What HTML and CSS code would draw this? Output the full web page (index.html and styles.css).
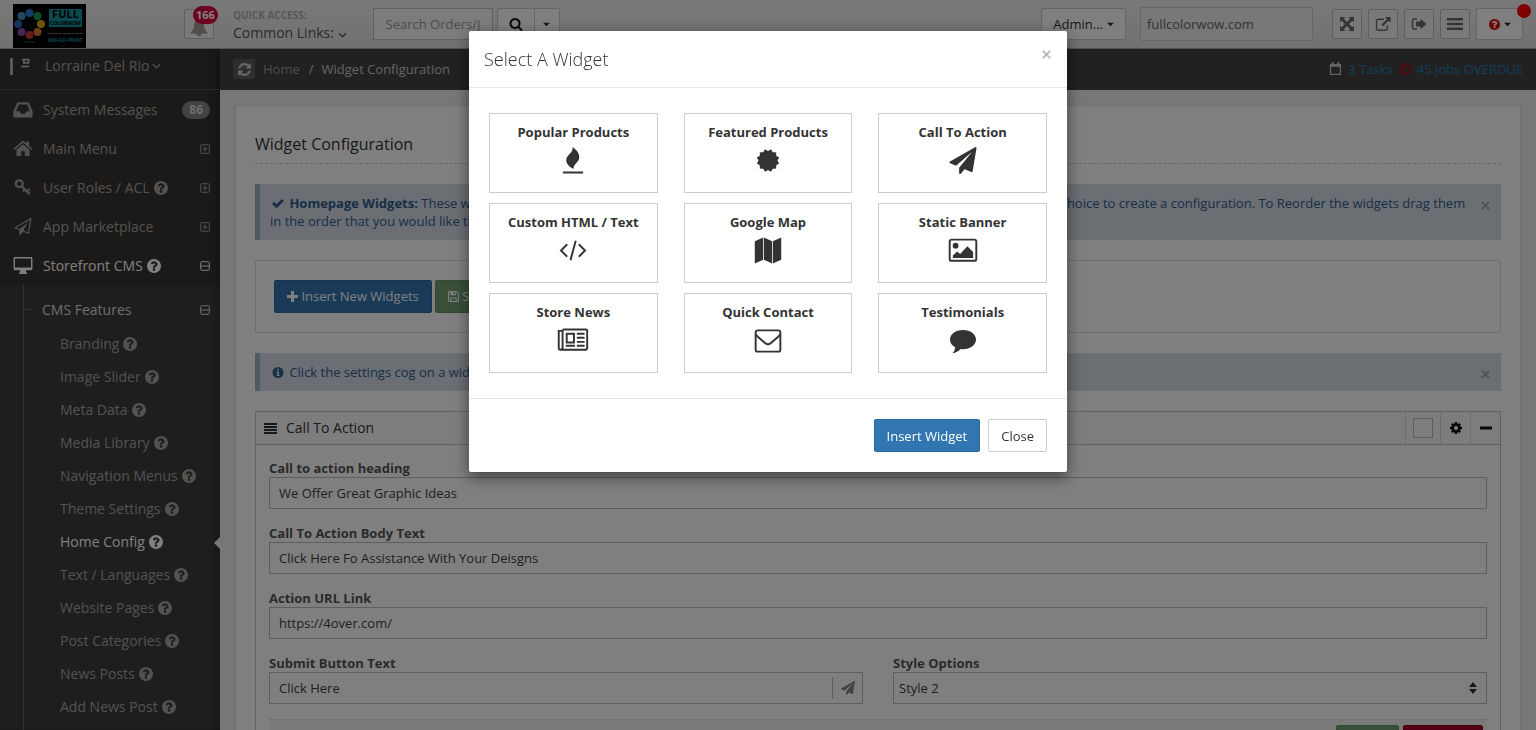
FILE: index.html
```html
<!DOCTYPE html>
<html lang="en">
<head>
  <meta charset="UTF-8">
  <meta name="viewport" content="width=device-width, initial-scale=1">
  <title>Widget Configuration</title>
  <link rel="stylesheet" href="styles.css">
</head>
<body>

  <!-- Icon set -->
  <svg class="sprite" aria-hidden="true">
    <symbol id="i-search" viewBox="0 0 1792 1792"><path d="M1216 832q0-185-131.500-316.500t-316.500-131.500-316.500 131.500-131.500 316.500 131.500 316.500 316.500 131.500 316.500-131.500 131.500-316.500zm512 832q0 52-38 90t-90 38q-54 0-90-38l-343-342q-179 124-399 124-143 0-273.500-55.500t-225-150-150-225-55.500-273.500 55.500-273.500 150-225 225-150 273.500-55.500 273.500 55.500 225 150 150 225 55.500 273.500q0 220-124 399l343 343q37 37 37 90z"/></symbol>
    <symbol id="i-caret" viewBox="0 0 10 6"><path d="M0 0.500h10L5 5.500z"/></symbol>
    <symbol id="i-angle" viewBox="0 0 10 6"><path d="M1 1l4 4 4-4" fill="none" stroke="currentColor" stroke-width="1.400"/></symbol>
    <symbol id="i-bell" viewBox="0 0 20 20"><path d="M10 1q1.300 0 1.300 1.500Q15 3.500 15 8.500c0 3.500 1.500 5.500 3.500 7v1h-6a2.500 2.500 0 0 1-5 0h-6v-1C3.500 14 5 12 5 8.500q0-5 3.700-6Q8.700 1 10 1z"/></symbol>
    <symbol id="i-help" viewBox="128 128 1536 1536"><path d="M1024 1376v-192q0-14-9-23t-23-9h-192q-14 0-23 9t-9 23v192q0 14 9 23t23 9h192q14 0 23-9t9-23zm256-672q0-88-55.500-163t-138.500-116-170-41q-243 0-371 213-15 24 8 42l132 100q7 6 19 6 16 0 25-12 53-68 86-92 34-24 86-24 48 0 85.500 26t37.500 59q0 38-20 61t-68 45q-63 28-115.500 86.500t-52.500 125.500v36q0 14 9 23t23 9h192q14 0 23-9t9-23q0-19 21.500-49.500t54.500-49.500q32-18 49-28.500t46-35 44.500-48 28-60.500 12.500-81zm384 192q0 209-103 385.500t-279.500 279.500-385.500 103-385.500-103-279.500-279.500-103-385.500 103-385.500 279.500-279.500 385.500-103 385.500 103 279.500 279.500 103 385.500z"/></symbol>
    <symbol id="i-expand" viewBox="0 0 16 16"><path d="M1 1h5.500L4.800 2.700 8 5.900l3.200-3.200L9.500 1H15v5.500l-1.700-1.700L10.100 8l3.200 3.200L15 9.500V15H9.500l1.700-1.700L8 10.100l-3.200 3.200L6.500 15H1V9.500l1.700 1.700L5.900 8 2.700 4.800 1 6.500z"/></symbol>
    <symbol id="i-external" viewBox="0 0 18 16"><path d="M10 2.700H3.700A2 2 0 0 0 1.700 4.700v8.300a2 2 0 0 0 2 2H12a2 2 0 0 0 2-2V9.500" fill="none" stroke="currentColor" stroke-width="1.500"/><path d="M11 0h6.500v6.500l-2.200-2.200-6.300 6.300-1.800-1.800 6.300-6.300z"/></symbol>
    <symbol id="i-signout" viewBox="0 0 16 14"><path d="M6 1.800H3.500a2 2 0 0 0-2 2v6.400a2 2 0 0 0 2 2H6" fill="none" stroke="currentColor" stroke-width="1.500"/><path d="M9.500 1.800L15.500 7l-6 5.200V9.500H5v-5h4.500z"/></symbol>
    <symbol id="i-bars" viewBox="0 0 16 14"><path d="M0 1h16v2.400H0zM0 5.800h16v2.400H0zM0 10.600h16V13H0z"/></symbol>
    <symbol id="i-justify" viewBox="0 0 13 11"><path d="M0 0h13v2H0zM0 3h13v2H0zM0 6h13v2H0zM0 9h13v2H0z"/></symbol>
    <symbol id="i-refresh" viewBox="128 128 1536 1536"><path d="M1639 1056q0 5-1 7-64 268-268 434.500t-478 166.500q-146 0-282.500-55t-243.500-157l-129 129q-19 19-45 19t-45-19-19-45v-448q0-26 19-45t45-19h448q26 0 45 19t19 45-19 45l-137 137q71 66 161 102t187 36q134 0 250-65t186-179q11-17 53-117 8-23 30-23h192q13 0 22.500 9.500t9.500 22.500zm25-800v448q0 26-19 45t-45 19h-448q-26 0-45-19t-19-45 19-45l138-138q-148-137-349-137-134 0-250 65t-186 179q-11 17-53 117-8 23-30 23h-199q-13 0-22.500-9.500t-9.500-22.500v-7q65-268 270-434.500t480-166.500q146 0 284 55.500t245 156.500l130-129q19-19 45-19t45 19 19 45z"/></symbol>
    <symbol id="i-calendar" viewBox="0 0 14 15"><path d="M1.700 4.500h10.600v8.800H1.700zM1 3h12" fill="none" stroke="currentColor" stroke-width="1.400"/><path d="M1 2.300h12v2.500H1zM3 0h2v3H3zM9 0h2v3H9z"/></symbol>
    <symbol id="i-clock" viewBox="0 0 12 12"><circle cx="6" cy="6" r="5" fill="none" stroke="currentColor" stroke-width="1.600"/><path d="M6.500 3v3.500H4" fill="none" stroke="currentColor" stroke-width="1.200"/></symbol>
    <symbol id="i-inbox" viewBox="0 0 17 15"><path fill-rule="evenodd" d="M3.500 1h10L17 9v4.500q0 1-1 1H1q-1 0-1-1V9zM4.800 3L2.400 9h3.200l1.200 2.300h3.400L11.400 9h3.200L12.200 3z"/></symbol>
    <symbol id="i-home" viewBox="0 0 18 16"><path d="M9 0.500l3 2.600V1.500h2.700v4L18 8.300l-1 1.200L9 2.700 1 9.500 0 8.300z"/><path d="M9 4l6.200 5.200V15h-4.500v-4.500H7.300V15H2.800V9.200z"/></symbol>
    <symbol id="i-key" viewBox="0 0 18 18"><g fill="none" stroke="currentColor" stroke-width="2.300"><ellipse cx="5" cy="5" rx="3.800" ry="3.500"/><path d="M7.500 7.500l8.500 8.500M11 11l-2 2.300M13.700 13l2.500-2.400"/></g></symbol>
    <symbol id="i-plane-o" viewBox="0 0 1792 1792"><path d="M1764 11q33 24 27 64l-256 1536q-5 29-32 45-14 8-31 8-11 0-24-5l-527-215-298 327q-18 21-47 21-14 0-23-4-19-7-30-23.500t-11-36.500v-452l-472-193q-37-14-40-55-3-39 32-59l1664-960q35-21 68 2zm-342 1499l221-1323-1434 827 336 137 863-639-478 797z"/></symbol>
    <symbol id="i-plane" viewBox="0 0 1792 1792"><path d="M1764 11q33 24 27 64l-256 1536q-5 29-32 45-14 8-31 8-11 0-24-5l-453-185-242 295q-18 23-49 23-13 0-22-4-19-7-30.500-23.500t-11.500-36.500v-349l864-1059-1069 925-395-162q-37-14-40-55-2-40 32-59l1664-960q15-9 32-9 20 0 36 11z"/></symbol>
    <symbol id="i-desktop" viewBox="0 0 20 18"><path fill-rule="evenodd" d="M1.500 0h17Q20 0 20 1.500v11q0 1.500-1.500 1.500h-5.300v2.500h1V18H6v-1.500h1V14H1.500Q0 14 0 12.500v-11Q0 0 1.500 0zm0 1.500V11h17V1.500z"/></symbol>
    <symbol id="i-plus-box" viewBox="0 0 10 10"><rect x="0.700" y="0.700" width="8.600" height="8.600" rx="1" fill="none" stroke="currentColor"/><path d="M2.500 5h5M5 2.500v5" stroke="currentColor"/></symbol>
    <symbol id="i-minus-box" viewBox="0 0 10 10"><rect x="0.700" y="0.700" width="8.600" height="8.600" rx="1" fill="none" stroke="currentColor"/><path d="M1 5h8" stroke="currentColor"/></symbol>
    <symbol id="i-check" viewBox="0 0 12 10"><path d="M0 5.300l2-2 2.500 2.500L10 0.500l2 2L4.500 9.800z"/></symbol>
    <symbol id="i-info" viewBox="0 0 12 12"><path fill-rule="evenodd" d="M6 0a6 6 0 1 1 0 12A6 6 0 0 1 6 0zM5 1.800v1.700h2V1.800zM4.200 4.700v1h.8v3h-.8v1.200h3.600V8.700H7v-4z"/></symbol>
    <symbol id="i-plus" viewBox="0 0 10 10"><path d="M3.600 0h2.800v3.600H10v2.800H6.400V10H3.600V6.400H0V3.600h3.600z"/></symbol>
    <symbol id="i-minus" viewBox="0 0 12 12"><path d="M0 4.500h12v3H0z"/></symbol>
    <symbol id="i-save" viewBox="0 0 12 12"><path fill-rule="evenodd" d="M1 0h8l3 3v8q0 1-1 1H1q-1 0-1-1V1q0-1 1-1zm.2 1.200v9.600h1.300V7h7v3.800h1.300V3.500L8.500 1.200v3.300h-6V1.200zm4.800 0v2.200h1.500V1.200zM3.700 8.200v2.600h4.600V8.200z"/></symbol>
    <symbol id="i-times" viewBox="0 0 10 10"><path d="M1 1l8 8M9 1L1 9" stroke="currentColor" stroke-width="2.200"/></symbol>
    <symbol id="i-cog" viewBox="128 128 1536 1536"><path d="M1152 896q0-106-75-181t-181-75-181 75-75 181 75 181 181 75 181-75 75-181zm512-109v222q0 12-8 23t-20 13l-185 28q-19 54-39 91 35 50 107 138 10 12 10 25t-9 23q-27 37-99 108t-94 71q-12 0-26-9l-138-108q-44 23-91 38-16 136-29 186-7 28-36 28h-222q-14 0-24.500-8.500t-11.500-21.500l-28-184q-49-16-90-37l-141 107q-10 9-25 9-14 0-25-11-126-114-165-168-7-10-7-23 0-12 8-23 15-21 51-66.500t54-70.500q-27-50-41-99l-183-27q-13-2-21-12.500t-8-23.500v-222q0-12 8-23t19-13l186-28q14-46 39-92-40-57-107-138-10-12-10-24 0-10 9-23 26-36 98.500-107.500t94.500-71.500q13 0 26 10l138 107q44-23 91-38 16-136 29-186 7-28 36-28h222q14 0 24.500 8.500t11.500 21.500l28 184q49 16 90 37l142-107q9-9 24-9 13 0 25 10 129 119 165 170 7 8 7 22 0 12-8 23-15 21-51 66.500t-54 70.500q26 50 41 98l183 28q13 2 21 12.500t8 23.500z"/></symbol>
    <symbol id="i-fire" viewBox="0 0 28 28"><path d="M13.500 0c4 3 7 6 7 10.500 0 5.500-6 6.500-6 12.200C10 20.500 7 17.500 7 13.500 7 8 14.500 6.500 13.500 0zM3.500 25.500h21V27.500h-21z"/></symbol>
    <symbol id="i-certificate" viewBox="0 0 28 28"><path d="M5.500 5.500h17v17h-17z"/><path d="M5.500 5.500h17v17h-17z" transform="rotate(30 14 14)"/><path d="M5.500 5.500h17v17h-17z" transform="rotate(60 14 14)"/></symbol>
    <symbol id="i-code" viewBox="0 0 28 28"><path d="M8 7.500L1.500 14 8 20.500M20 7.500l6.500 6.500-6.500 6.500M16.800 4l-5.400 20" fill="none" stroke="currentColor" stroke-width="2"/></symbol>
    <symbol id="i-map" viewBox="0 0 28 28"><path d="M.3 4.500L9 .5v23l-8.700 4zM9.800.5l8.400 4v23l-8.400-4zM19 4.500l8.700-4v23l-8.700 4z"/></symbol>
    <symbol id="i-image" viewBox="0 0 30 28"><rect x="1.200" y="2.700" width="27.600" height="22" rx="2" fill="none" stroke="currentColor" stroke-width="2"/><circle cx="7.300" cy="9" r="3"/><path d="M4.500 21.700v-2.500L9 15l3 2.500 7.500-8 6 6v6.200z"/></symbol>
    <symbol id="i-news" viewBox="0 0 32 28"><path d="M5.500 2.500h24q1.200 0 1.200 1.200v18q0 1.800-1.800 1.800H3Q1.200 23.500 1.200 21.700V4h4M5.200 2.500v19q0 2-2 2M9.500 7h7.500v9H9.500zM8.500 19.500h9.500M20 7h8M20 11.200h8M20 15.400h8M20 19.500h8" fill="none" stroke="currentColor" stroke-width="2"/></symbol>
    <symbol id="i-mail" viewBox="0 0 28 28"><rect x="1.200" y="3.500" width="25.600" height="22" rx="2" fill="none" stroke="currentColor" stroke-width="2"/><path d="M1.500 8q2 2.500 9.500 8.700 3 2.600 6 0Q24.500 10.500 26.500 8" fill="none" stroke="currentColor" stroke-width="2"/></symbol>
    <symbol id="i-comment" viewBox="0 0 28 28"><path d="M14 3c7.500 0 13.500 4.300 13.500 10S21.500 23 14 23q-1.300 0-2.500-.2Q8.500 26.500 3 27.300q2.500-2.300 3-6Q.5 18 .5 13C.5 7.300 6.500 3 14 3z"/></symbol>
    <symbol id="i-updown" viewBox="0 0 8 12"><path d="M0 5l4-5 4 5zM0 7h8l-4 5z"/></symbol>
  </svg>

  <header class="topbar">
    <a href="#" class="logo" aria-label="Full Colorwow">
      <svg viewBox="0 0 73 44">
        <rect width="73" height="44"/>
        <circle cx="16.500" cy="9" r="4" fill="#2a7fd0"/>
        <circle cx="24.500" cy="12" r="4" fill="#1c9a50"/>
        <circle cx="28" cy="20" r="4" fill="#d8a818"/>
        <circle cx="24.500" cy="28" r="4" fill="#d07a30"/>
        <circle cx="16.500" cy="31" r="4" fill="#c8382c"/>
        <circle cx="8.500" cy="28" r="4" fill="#9048b0"/>
        <circle cx="5" cy="20" r="4" fill="#2468b8"/>
        <circle cx="8.500" cy="12" r="4" fill="#3f93b8"/>
        <path d="M11 38h11" stroke="#0f6068"/>
        <rect x="36" y="5" width="33" height="18" fill="#17929c"/>
        <text x="52.500" y="14" class="logo-full">FULL</text>
        <text x="52.500" y="21" class="logo-name">COLORWOW</text>
        <text x="52.500" y="30" class="logo-tag">YOUR ONLINE ONESTOP PRINTSHOP</text>
        <text x="52.500" y="38" class="logo-phone">800-GO-PRINT</text>
      </svg>
    </a>
    <button class="icon-btn bell" aria-label="Notifications">
      <svg><use href="#i-bell"/></svg>
      <span class="bell-count">166</span>
    </button>
    <div class="quick">
      <span class="quick-label">QUICK ACCESS:</span>
      <a href="#">Common Links: <svg class="angle"><use href="#i-angle"/></svg></a>
    </div>
    <form class="search">
      <input type="text" placeholder="Search Orders/Jobs" aria-label="Search">
      <div class="btn-group">
        <button type="button" class="btn-white go" aria-label="Search"><svg><use href="#i-search"/></svg></button>
        <button type="button" class="btn-white drop" aria-label="Search options"><svg class="caret"><use href="#i-caret"/></svg></button>
      </div>
    </form>
    <div class="top-right">
      <button class="btn-white admin">Admin... <svg class="caret"><use href="#i-caret"/></svg></button>
      <input class="domain" type="text" value="fullcolorwow.com" aria-label="Domain">
      <div class="icon-row">
        <button class="icon-btn" aria-label="Full screen"><svg><use href="#i-expand"/></svg></button>
        <button class="icon-btn" aria-label="Open site"><svg><use href="#i-external"/></svg></button>
        <button class="icon-btn" aria-label="Sign out"><svg><use href="#i-signout"/></svg></button>
        <button class="icon-btn" aria-label="Menu"><svg><use href="#i-bars"/></svg></button>
        <button class="btn-white help-btn" aria-label="Help"><svg class="help-red"><use href="#i-help"/></svg><svg class="caret"><use href="#i-caret"/></svg><span class="dot"></span></button>
      </div>
    </div>
  </header>

  <div class="layout">
    <aside class="sidebar">
      <a href="#" class="user">
        <svg class="avatar" viewBox="0 0 28 20"><path d="M1.500 2v17" stroke="#c8c8c8" stroke-width="2.500"/><path d="M12 3.500h7M13 7h6M11 10.500h8M14 3v4M18.500 3v4" stroke="#c8c8c8" stroke-width="1.600" fill="none"/></svg>
        Lorraine Del Rio <svg class="angle"><use href="#i-angle"/></svg>
      </a>
      <nav>
        <ul class="menu">
          <li><a href="#"><svg class="mi"><use href="#i-inbox"/></svg>System Messages<span class="count">86</span></a></li>
          <li><a href="#"><svg class="mi"><use href="#i-home"/></svg>Main Menu<svg class="toggle"><use href="#i-plus-box"/></svg></a></li>
          <li><a href="#"><svg class="mi"><use href="#i-key"/></svg>User Roles / ACL<svg class="help"><use href="#i-help"/></svg><svg class="toggle"><use href="#i-plus-box"/></svg></a></li>
          <li><a href="#"><svg class="mi"><use href="#i-plane-o"/></svg>App Marketplace<svg class="toggle"><use href="#i-plus-box"/></svg></a></li>
          <li><a href="#" class="open"><svg class="mi"><use href="#i-desktop"/></svg>Storefront CMS<svg class="help"><use href="#i-help"/></svg><svg class="toggle"><use href="#i-minus-box"/></svg></a></li>
        </ul>
        <div class="submenu">
          <a href="#" class="sub-title">CMS Features<svg class="toggle"><use href="#i-minus-box"/></svg></a>
          <ul>
            <li><a href="#">Branding<svg class="help"><use href="#i-help"/></svg></a></li>
            <li><a href="#">Image Slider<svg class="help"><use href="#i-help"/></svg></a></li>
            <li><a href="#">Meta Data<svg class="help"><use href="#i-help"/></svg></a></li>
            <li><a href="#">Media Library<svg class="help"><use href="#i-help"/></svg></a></li>
            <li><a href="#">Navigation Menus<svg class="help"><use href="#i-help"/></svg></a></li>
            <li><a href="#">Theme Settings<svg class="help"><use href="#i-help"/></svg></a></li>
            <li><a href="#" class="current">Home Config<svg class="help"><use href="#i-help"/></svg></a></li>
            <li><a href="#">Text / Languages<svg class="help"><use href="#i-help"/></svg></a></li>
            <li><a href="#">Website Pages<svg class="help"><use href="#i-help"/></svg></a></li>
            <li><a href="#">Post Categories<svg class="help"><use href="#i-help"/></svg></a></li>
            <li><a href="#">News Posts<svg class="help"><use href="#i-help"/></svg></a></li>
            <li><a href="#">Add News Post<svg class="help"><use href="#i-help"/></svg></a></li>
          </ul>
        </div>
      </nav>
    </aside>

    <main>
      <div class="ribbon">
        <button class="refresh" aria-label="Refresh"><svg><use href="#i-refresh"/></svg></button>
        <ol class="crumbs">
          <li><a href="#">Home</a></li>
          <li>Widget Configuration</li>
        </ol>
        <div class="status">
          <svg class="cal"><use href="#i-calendar"/></svg>
          <a href="#">3 Tasks</a>
          <svg class="clock"><use href="#i-clock"/></svg>
          <a href="#">45 Jobs OVERDUE</a>
        </div>
      </div>

      <section class="panel">
        <h1>Widget Configuration</h1>

        <div class="alert">
          <p><svg><use href="#i-check"/></svg> <strong>Homepage Widgets:</strong> These widgets will show up on your homepage. Insert new widgets and simply click in the settings of your choice to create a configuration. To Reorder the widgets drag them in the order that you would like them to appear.</p>
          <button class="close" aria-label="Dismiss"><svg><use href="#i-times"/></svg></button>
        </div>

        <div class="well">
          <button class="btn btn-primary"><svg><use href="#i-plus"/></svg> Insert New Widgets</button>
          <button class="btn btn-success"><svg><use href="#i-save"/></svg> Save Changes</button>
        </div>

        <div class="alert">
          <p><svg><use href="#i-info"/></svg> Click the settings cog on a widget to edit its options.</p>
          <button class="close" aria-label="Dismiss"><svg><use href="#i-times"/></svg></button>
        </div>

        <article class="widget">
          <header>
            <svg class="handle"><use href="#i-justify"/></svg>
            <h2>Call To Action</h2>
            <label class="tool tool-check"><input type="checkbox" aria-label="Select widget"></label>
            <button class="tool" aria-label="Settings"><svg><use href="#i-cog"/></svg></button>
            <button class="tool" aria-label="Collapse"><svg><use href="#i-minus"/></svg></button>
          </header>
          <form>
            <div class="field">
              <label for="heading">Call to action heading</label>
              <input id="heading" type="text" value="We Offer Great Graphic Ideas">
            </div>
            <div class="field">
              <label for="body">Call To Action Body Text</label>
              <input id="body" type="text" value="Click Here Fo Assistance With Your Deisgns">
            </div>
            <div class="field">
              <label for="url">Action URL Link</label>
              <input id="url" type="text" value="https://4over.com/">
            </div>
            <div class="field-row">
              <div class="field">
                <label for="submit">Submit Button Text</label>
                <div class="with-icon">
                  <input id="submit" type="text" value="Click Here">
                  <span class="append"><svg><use href="#i-plane"/></svg></span>
                </div>
              </div>
              <div class="field">
                <label for="style">Style Options</label>
                <div class="select">
                  <select id="style"><option>Style 1</option><option selected>Style 2</option></select>
                  <svg><use href="#i-updown"/></svg>
                </div>
              </div>
            </div>
            <footer>
              <button type="button" class="btn btn-success" aria-label="Save"></button>
              <button type="button" class="btn btn-danger" aria-label="Remove"></button>
            </footer>
          </form>
        </article>
      </section>
    </main>
  </div>

  <!-- Widget picker -->
  <div class="backdrop">
    <div class="modal" role="dialog" aria-labelledby="modal-title">
      <div class="modal-header">
        <h4 id="modal-title">Select A Widget</h4>
        <button class="close" aria-label="Close"><svg><use href="#i-times"/></svg></button>
      </div>
      <div class="modal-body">
        <button class="tile">Popular Products<svg><use href="#i-fire"/></svg></button>
        <button class="tile">Featured Products<svg><use href="#i-certificate"/></svg></button>
        <button class="tile">Call To Action<svg><use href="#i-plane"/></svg></button>
        <button class="tile">Custom HTML / Text<svg><use href="#i-code"/></svg></button>
        <button class="tile">Google Map<svg><use href="#i-map"/></svg></button>
        <button class="tile">Static Banner<svg><use href="#i-image"/></svg></button>
        <button class="tile">Store News<svg><use href="#i-news"/></svg></button>
        <button class="tile">Quick Contact<svg><use href="#i-mail"/></svg></button>
        <button class="tile">Testimonials<svg><use href="#i-comment"/></svg></button>
      </div>
      <div class="modal-footer">
        <button class="btn btn-primary">Insert Widget</button>
        <button class="btn btn-default">Close</button>
      </div>
    </div>
  </div>

</body>
</html>
```

FILE: styles.css
```css
* {
  box-sizing: border-box;
}

body {
  margin: 0;
  height: 100vh;
  overflow: hidden;
  display: flex;
  flex-direction: column;
  font-family: "Open Sans", Arial, sans-serif;
  font-size: 13px;
  line-height: 18px;
  color: #333;
  background: #eee;
}

button, input, select {
  font: inherit;
  color: inherit;
}

button {
  cursor: pointer;
}

svg {
  fill: currentColor;
  flex-shrink: 0;
}

a {
  text-decoration: none;
}

ul, ol {
  list-style: none;
  margin: 0;
  padding: 0;
}

.sprite {
  position: absolute;
  width: 0;
  height: 0;
}

/* Top bar */
.topbar {
  height: 49px;
  flex-shrink: 0;
  display: flex;
  align-items: center;
  padding: 0 13px;
  background: linear-gradient(to bottom, #f3f3f3, #e2e2e2);
  border-bottom: 1px solid #a8a8a8;
}

.logo {
  width: 73px;
  height: 44px;
  margin-top: 3px;
}

.logo svg {
  display: block;
  width: 73px;
  height: 44px;
  fill: #000;
}

.logo text {
  text-anchor: middle;
  font-weight: 700;
}

.logo-full {
  font-size: 11px;
}

.logo-name {
  font-size: 5px;
}

.logo-tag {
  font-size: 2px;
  fill: #ccc;
}

.logo-phone {
  font-size: 5px;
  fill: #17929c;
}

.icon-btn {
  width: 30px;
  height: 30px;
  padding: 0;
  display: flex;
  align-items: center;
  justify-content: center;
  background: #f3f3f3;
  border: 1px solid #bfbfbf;
  border-radius: 2px;
  color: #6d6a69;
}

.icon-btn svg {
  width: 16px;
  height: 16px;
}

.bell {
  position: relative;
  margin-left: 98px;
  color: #a49b97;
}

.bell svg {
  width: 20px;
  height: 20px;
  margin-top: 6px;
}

.bell-count {
  position: absolute;
  top: -4px;
  left: 8px;
  padding: 0 3px;
  border-radius: 10px;
  background: #d8003c;
  color: #fff;
  font-size: 11px;
  font-weight: 700;
}

.quick {
  display: flex;
  flex-direction: column;
  margin-left: 19px;
  color: #555;
}

.quick-label {
  font-size: 10px;
  font-weight: 700;
  color: #afafaf;
}

.quick a {
  font-size: 14px;
  color: inherit;
}

.angle {
  width: 9px;
  height: 6px;
}

.caret {
  width: 7px;
  height: 5px;
}

.search {
  display: flex;
  gap: 4px;
  margin-left: 26px;
}

.search input {
  width: 120px;
  height: 32px;
  padding: 0 12px;
  background: #f8f8f8;
  border: 1px solid #bfbfbf;
}

.search input::placeholder {
  color: #9a9a9a;
}

.btn-group {
  display: flex;
}

.btn-white {
  height: 32px;
  display: flex;
  align-items: center;
  justify-content: center;
  gap: 4px;
  padding: 0 11px;
  background: #fff;
  border: 1px solid #ccc;
  border-radius: 2px;
}

.btn-white.go {
  width: 38px;
  color: #111;
}

.btn-white.go svg {
  width: 14px;
  height: 14px;
}

.btn-white.drop {
  width: 26px;
  margin-left: -1px;
  padding: 0;
}

.top-right {
  display: flex;
  align-items: center;
  gap: 14px;
  margin-left: auto;
}

.domain {
  width: 173px;
  height: 34px;
  padding: 0 6px;
  color: #666;
  background: #f0f0f0;
  border: 1px solid #ccc;
}

.icon-row {
  display: flex;
  align-items: center;
  gap: 6px;
  margin-left: 5px;
}

.help-btn {
  position: relative;
  width: 47px;
}

.help-red {
  width: 11px;
  height: 11px;
  color: #d00;
}

.dot {
  position: absolute;
  top: -5px;
  right: -9px;
  width: 14px;
  height: 14px;
  border-radius: 50%;
  background: #f00;
}

/* Sidebar */
.layout {
  flex: 1;
  min-height: 0;
  display: flex;
  overflow: hidden;
}

.sidebar {
  width: 220px;
  flex-shrink: 0;
  display: flex;
  flex-direction: column;
  font-size: 14px;
  background: #363433;
  box-shadow: inset -6px 0 8px -4px #222;
}

.sidebar nav {
  flex: 1;
  display: flex;
  flex-direction: column;
}

.sidebar a {
  color: #a8a4a2;
}

.user {
  height: 41px;
  display: flex;
  align-items: center;
  gap: 3px;
  padding: 0 10px 6px;
  border-bottom: 1px solid #525151;
}

.avatar {
  width: 28px;
  height: 20px;
  margin-right: 4px;
}

.menu a {
  display: flex;
  align-items: center;
  height: 39px;
  padding: 0 10px 0 13px;
}

.sidebar .open,
.sidebar .current {
  color: #fff;
}

.mi {
  width: 20px;
  height: 17px;
  margin-right: 10px;
}

.help {
  width: 14px;
  height: 14px;
  margin-left: 4px;
}

.toggle {
  width: 10px;
  height: 10px;
  margin-left: auto;
}

.count {
  margin-left: auto;
  padding: 0 7px;
  border-radius: 9px;
  background: #858585;
  color: #ddd;
  font-size: 12px;
  font-weight: 700;
}

.submenu {
  flex: 1;
  position: relative;
  padding: 8px 10px 0 42px;
  background: #3c3c3c;
  box-shadow: inset -6px 0 8px -4px #282828;
}

/* tree guide */
.submenu::before {
  content: "";
  position: absolute;
  top: 0;
  bottom: 0;
  left: 23px;
  border-left: 1px solid #666;
}

.submenu::after {
  content: "";
  position: absolute;
  top: 24px;
  left: 24px;
  width: 7px;
  border-top: 1px solid #666;
}

.submenu .sub-title {
  display: flex;
  align-items: center;
  height: 34px;
  color: #ddd;
}

.submenu li a {
  display: flex;
  align-items: center;
  height: 33px;
  padding-left: 18px;
}

.submenu .current {
  position: relative;
}

.current::after {
  content: "";
  position: absolute;
  right: -10px;
  top: 12px;
  border: 6px solid transparent;
  border-left-width: 0;
  border-right-color: #eee;
}

/* Ribbon */
main {
  flex: 1;
  min-width: 0;
}

.ribbon {
  height: 41px;
  display: flex;
  align-items: center;
  padding: 0 13px 1px;
  background: #424242;
  color: #c8c8c8;
}

.refresh {
  width: 22px;
  height: 20px;
  padding: 0;
  display: flex;
  align-items: center;
  justify-content: center;
  border: 0;
  border-radius: 2px;
  background: #5c5c5c;
  color: #ccc;
}

.refresh svg {
  width: 13px;
  height: 13px;
}

.crumbs {
  display: flex;
  margin-left: 8px;
}

.crumbs li + li::before {
  content: "/";
  padding: 0 8px 0 9px;
}

.crumbs a {
  color: #999;
}

.status {
  display: flex;
  align-items: center;
  gap: 6px;
  margin-left: auto;
}

.status a {
  color: #2380b5;
}

.cal {
  width: 13px;
  height: 14px;
}

.clock {
  width: 12px;
  height: 12px;
  color: #c00010;
}

/* Content */
.panel {
  margin: 15px 15px 0;
  padding: 28px 19px;
  background: #fff;
  border: 1px solid #e0e0e0;
}

h1 {
  margin: 0 0 20px;
  padding-bottom: 8px;
  font-size: 16px;
  line-height: 21px;
  font-weight: 400;
  border-bottom: 1px dashed #ccc;
}

.alert {
  display: flex;
  align-items: flex-start;
  margin-bottom: 20px;
  padding: 10px;
  color: #305d8c;
  background: #d6dde7;
  border-left: 5px solid #9cb4c5;
}

.alert p {
  flex: 1;
  margin: 0;
}

.alert p svg {
  width: 12px;
  height: 11px;
  margin: 0 2px;
  vertical-align: -1px;
}

.close {
  display: flex;
  padding: 0;
  background: none;
  border: 0;
  color: #b8b8b8;
}

.close svg {
  width: 9px;
  height: 9px;
}

.alert .close {
  margin: 7px 1px 0 8px;
  color: #a0a6ae;
}

.well {
  display: flex;
  gap: 3px;
  margin-bottom: 20px;
  padding: 19px 18px;
  border: 1px solid #ddd;
  border-radius: 2px;
}

.btn {
  height: 33px;
  padding: 0 12px;
  border: 1px solid #ccc;
  border-radius: 2px;
  background: #fff;
  white-space: nowrap;
}

.well .btn {
  padding: 0 12px 1px;
}

.btn svg {
  width: 11px;
  height: 11px;
  vertical-align: -1px;
}

.btn-primary {
  background: #3276b1;
  border-color: #2c699d;
  color: #fff;
}

.btn-success {
  background: #739e73;
  border-color: #659265;
  color: #fff;
}

.btn-danger {
  background: #a90329;
  border-color: #900323;
  color: #fff;
}

.widget {
  border: 1px solid #c2c2c2;
}

.widget > header {
  display: flex;
  align-items: center;
  height: 33px;
  padding-left: 8px;
  background: #fafafa;
  border-bottom: 1px solid #c2c2c2;
}

.handle {
  width: 13px;
  height: 11px;
}

h2 {
  flex: 1;
  margin: 0 0 0 9px;
  font-size: 14px;
  line-height: 18px;
  font-weight: 400;
}

.tool {
  width: 30px;
  height: 32px;
  padding: 0;
  display: flex;
  align-items: center;
  justify-content: center;
  background: none;
  border: 0;
  border-left: 1px solid #ddd;
  color: #111;
}

.tool-check {
  width: 35px;
}

.tool svg {
  width: 12px;
  height: 12px;
}

.tool input {
  appearance: none;
  width: 20px;
  height: 20px;
  margin: 0;
  border: 1px solid #bdbdbd;
}

.widget form {
  padding: 14px 13px;
}

.field {
  margin-bottom: 15px;
}

.field label {
  display: block;
  color: #555;
  font-weight: 700;
}

.field input,
.field select {
  display: block;
  width: 100%;
  height: 32px;
  padding: 0 9px 1px;
  color: #404040;
  background: #fff;
  border: 1px solid #bdbdbd;
  border-radius: 0;
}

.field-row {
  display: grid;
  grid-template-columns: 1fr 1fr;
  gap: 30px;
}

.with-icon,
.select {
  position: relative;
}

.append {
  position: absolute;
  top: 5px;
  right: 1px;
  width: 30px;
  height: 22px;
  display: flex;
  align-items: center;
  justify-content: center;
  border-left: 1px solid #bdbdbd;
  color: #888;
}

.append svg {
  width: 14px;
  height: 14px;
}

.field select {
  appearance: none;
  padding: 0 5px 1px;
}

.select svg {
  position: absolute;
  top: 10px;
  right: 10px;
  width: 8px;
  height: 12px;
}

.widget footer {
  display: flex;
  justify-content: flex-end;
  gap: 4px;
  padding: 5px 4px;
  background: #f5f5f5;
  border-top: 1px solid #e0e0e0;
}

.widget footer .btn-success {
  width: 63px;
}

.widget footer .btn-danger {
  width: 80px;
}

/* Modal */
.backdrop {
  position: fixed;
  inset: 0;
  padding-top: 31px;
  background: rgba(0, 0, 0, 0.5);
}

.modal {
  max-width: 598px;
  margin: 0 auto;
  background: #fff;
  border-radius: 2px;
  box-shadow: 0 5px 15px rgba(0, 0, 0, 0.5);
}

.modal-header {
  display: flex;
  justify-content: space-between;
  align-items: flex-start;
  padding: 16px 16px 16px 15px;
  border-bottom: 1px solid #e5e5e5;
}

.modal-header .close {
  margin-top: 3px;
}

h4 {
  margin: 0;
  font-size: 18px;
  line-height: 24px;
  font-weight: 300;
}

.modal-body {
  display: grid;
  grid-template-columns: repeat(3, 1fr);
  gap: 10px 26px;
  padding: 25px 20px;
}

.tile {
  height: 80px;
  display: flex;
  flex-direction: column;
  align-items: center;
  gap: 6px;
  padding: 9px 0 0;
  font-weight: 700;
  background: #fff;
  border: 1px solid #ccc;
}

.tile svg {
  width: 32px;
  height: 27px;
}

.modal-footer {
  display: flex;
  justify-content: flex-end;
  gap: 8px;
  padding: 20px;
  border-top: 1px solid #e5e5e5;
}
```
